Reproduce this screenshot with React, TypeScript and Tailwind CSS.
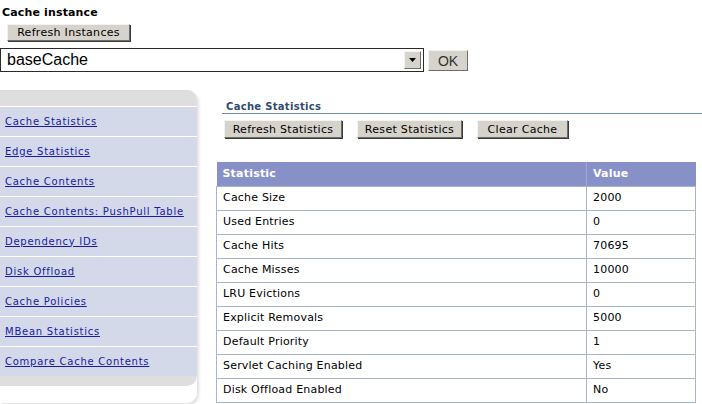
import React from "react";

const links = [
  "Cache Statistics",
  "Edge Statistics",
  "Cache Contents",
  "Cache Contents: PushPull Table",
  "Dependency IDs",
  "Disk Offload",
  "Cache Policies",
  "MBean Statistics",
  "Compare Cache Contents",
];

const stats: [string, string][] = [
  ["Cache Size", "2000"],
  ["Used Entries", "0"],
  ["Cache Hits", "70695"],
  ["Cache Misses", "10000"],
  ["LRU Evictions", "0"],
  ["Explicit Removals", "5000"],
  ["Default Priority", "1"],
  ["Servlet Caching Enabled", "Yes"],
  ["Disk Offload Enabled", "No"],
];

function WinButton({ label, className = "" }: { label: string; className?: string }) {
  return (
    <button
      className={`flex items-center justify-center bg-[#d6d3cc] border border-t-[#f4f3f0] border-l-[#f4f3f0] border-b-[#6f6d68] border-r-[#6f6d68] shadow-[1px_1px_0_#3a3a3a] text-[11px] tracking-[0.3px] text-black leading-none ${className}`}
    >
      {label}
    </button>
  );
}

export default function App() {
  return (
    <div className="w-[702px] h-[404px] overflow-hidden bg-white text-black font-['DejaVu_Sans',Verdana,sans-serif] text-[11px]">
      {/* Cache instance picker */}
      <div className="pl-[2px] pt-[6px] font-bold text-[11px] tracking-[0.15px] leading-[14px]">Cache instance</div>
      <WinButton label="Refresh Instances" className="mt-[4px] ml-[7px] w-[123px] h-[17px]" />
      <div className="flex items-start mt-[7px]">
        <div className="w-[424px] h-[24px] border border-[#2a2a2a] flex items-center justify-between pl-[6px] pr-[2px]">
          <span className="font-['Liberation_Sans',Arial,sans-serif] text-[16px] leading-none">baseCache</span>
          <span className="w-[17px] h-[18px] bg-[#d6d3cc] border border-t-[#f4f3f0] border-l-[#f4f3f0] border-b-[#6f6d68] border-r-[#6f6d68] flex items-center justify-center">
            <svg width="7" height="4" viewBox="0 0 7 4">
              <path d="M0 0h7L3.5 4z" fill="#000" />
            </svg>
          </span>
        </div>
        <button className="ml-[4px] mt-[2px] w-[40px] h-[21px] bg-[#d6d3cc] border border-t-[#f4f3f0] border-l-[#f4f3f0] border-b-[#6f6d68] border-r-[#6f6d68] font-['Liberation_Sans',Arial,sans-serif] text-[14px] text-[#333] leading-none">
          OK
        </button>
      </div>

      <div className="flex mt-[18px]">
        {/* Side navigation */}
        <div className="w-[197px] flex flex-col shrink-0 shadow-[2px_2px_3px_rgba(0,0,0,0.12)] rounded-r-[10px]">
          <div className="h-[16px] bg-[#dedede] rounded-tr-[10px]" />
          {links.map((l) => (
            <div key={l} className="h-[30px] border-t border-white bg-[#d3d9e8] flex items-center pl-[5px]">
              <a href="#" className="text-[10px] text-[#1a1aa6] underline tracking-[0.75px] leading-none">
                {l}
              </a>
            </div>
          ))}
          <div className="h-[10px] bg-[#dedede] rounded-br-[10px]" />
        </div>

        {/* Statistics panel */}
        <div className="flex-1 ml-[19px] flex flex-col">
          <div className="mt-[10px] ml-[6px] border-b border-[#6d8fb2] pl-[4px] text-[10px] font-bold text-[#2f4d70] tracking-[0.3px] leading-[13px]">
            Cache Statistics
          </div>
          <div className="flex mt-[6px] ml-[8px] gap-[15px]">
            <WinButton label="Refresh Statistics" className="w-[118px] h-[18px]" />
            <WinButton label="Reset Statistics" className="w-[105px] h-[18px]" />
            <WinButton label="Clear Cache" className="w-[91px] h-[18px]" />
          </div>
          <table className="mt-[24px] w-[480px] border-collapse text-[11px] tracking-[0.2px]">
            <thead>
              <tr className="h-[24px] bg-[#8890c8] text-white font-bold">
                <th className="w-[370px] text-left pl-[6px] font-bold">Statistic</th>
                <th className="text-left pl-[6px] font-bold border-l border-[#a2a8d6]">Value</th>
              </tr>
            </thead>
            <tbody>
              {stats.map(([k, v]) => (
                <tr key={k} className="h-[24px]">
                  <td className="border border-[#a7b4cc] pl-[6px]">{k}</td>
                  <td className="border border-[#a7b4cc] pl-[6px]">{v}</td>
                </tr>
              ))}
            </tbody>
          </table>
        </div>
      </div>
    </div>
  );
}
